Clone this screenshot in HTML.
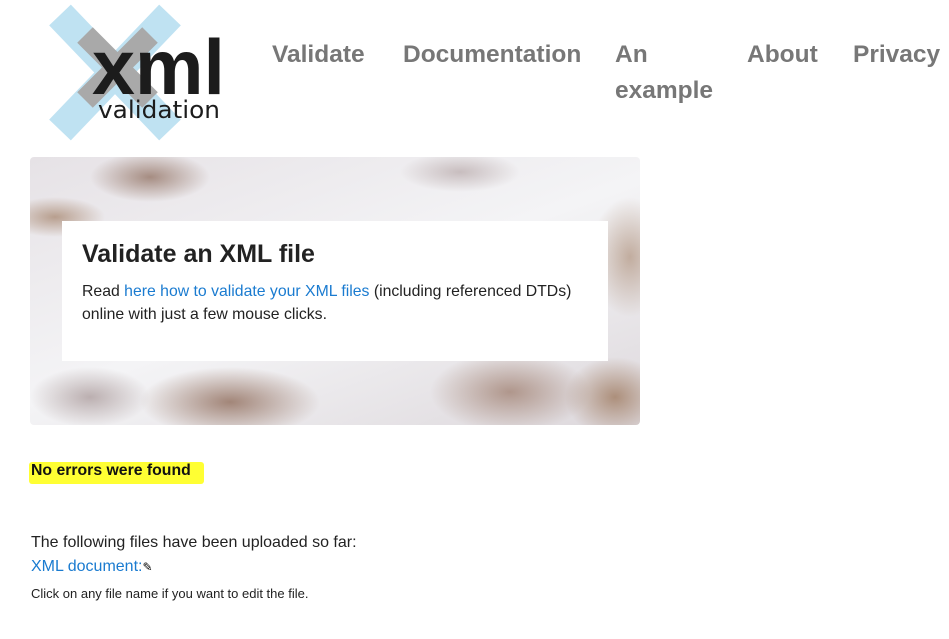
<!DOCTYPE html>
<html><head><meta charset="utf-8"><style>
body{margin:0;width:949px;height:639px;background:#fff;font-family:"Liberation Sans",sans-serif;position:relative;overflow:hidden}
.nav{position:absolute;top:37px;font-size:24.5px;font-weight:bold;color:#777;line-height:36px}
.banner{position:absolute;left:30px;top:157px;width:610px;height:268px;border-radius:4px;overflow:hidden;
background:
radial-gradient(ellipse 60px 25px at 120px 20px,rgba(120,80,60,.6),transparent),
radial-gradient(ellipse 50px 20px at 25px 60px,rgba(150,110,80,.6),transparent),
radial-gradient(ellipse 90px 35px at 200px 245px,rgba(130,90,70,.7),transparent),
radial-gradient(ellipse 60px 30px at 60px 240px,rgba(150,130,130,.6),transparent),
radial-gradient(ellipse 80px 40px at 480px 235px,rgba(140,100,80,.6),transparent),
radial-gradient(ellipse 50px 40px at 585px 240px,rgba(150,110,80,.7),transparent),
radial-gradient(ellipse 40px 60px at 600px 100px,rgba(150,110,80,.5),transparent),
radial-gradient(ellipse 60px 20px at 430px 15px,rgba(160,140,140,.5),transparent),
linear-gradient(160deg,#e6e2e6,#f4f4f6 50%,#ddd8dc);}
.box{position:absolute;left:32px;top:64px;width:546px;height:140px;background:#fff}
.box h1{margin:0;position:absolute;left:20px;top:19px;font-size:25px;color:#222}
.box p{margin:0;position:absolute;left:20px;top:59px;font-size:15.8px;line-height:23px;color:#222;width:525px}
a{color:#1a7bd0;text-decoration:none}
</style></head><body>
<svg style="position:absolute;left:40px;top:0" width="200" height="145">
<g stroke="#bfe2f2" stroke-width="30"><line x1="20" y1="15" x2="130" y2="130"/><line x1="130" y1="15" x2="20" y2="130"/></g>
<g stroke="#a9a9a9" stroke-width="22"><line x1="45" y1="35" x2="110" y2="100"/><line x1="110" y1="35" x2="45" y2="100"/></g>
<text x="52" y="94" font-family="Liberation Sans" font-weight="bold" font-size="78" fill="#1c1c1c" textLength="133" lengthAdjust="spacingAndGlyphs">xml</text>
<text x="58" y="118" font-family="DejaVu Sans" font-size="24" fill="#1c1c1c" textLength="122" lengthAdjust="spacingAndGlyphs">validation</text>
</svg>
<div class="nav" style="left:272px">Validate</div>
<div class="nav" style="left:403px">Documentation</div>
<div class="nav" style="left:615px">An<br>example</div>
<div class="nav" style="left:747px">About</div>
<div class="nav" style="left:853px">Privacy</div>
<div class="banner"><div class="box"><h1>Validate an XML file</h1><p>Read <a>here how to validate your XML files</a> (including referenced DTDs) online with just a few mouse clicks.</p></div></div>
<div style="position:absolute;left:29px;top:462px;width:175px;height:22px;background:#ffff33;border-radius:3px"></div>
<div style="position:absolute;left:31px;top:462px;font-size:15.8px;font-weight:bold;color:#111">No errors were found</div>
<div style="position:absolute;left:31px;top:534px;font-size:16px;color:#222">The following files have been uploaded so far:</div>
<div style="position:absolute;left:31px;top:558px;font-size:16px"><a>XML document:</a><span style="font-size:12px">✎</span></div>
<div style="position:absolute;left:31px;top:586px;font-size:13px;color:#222">Click on any file name if you want to edit the file.</div>
</body></html>
